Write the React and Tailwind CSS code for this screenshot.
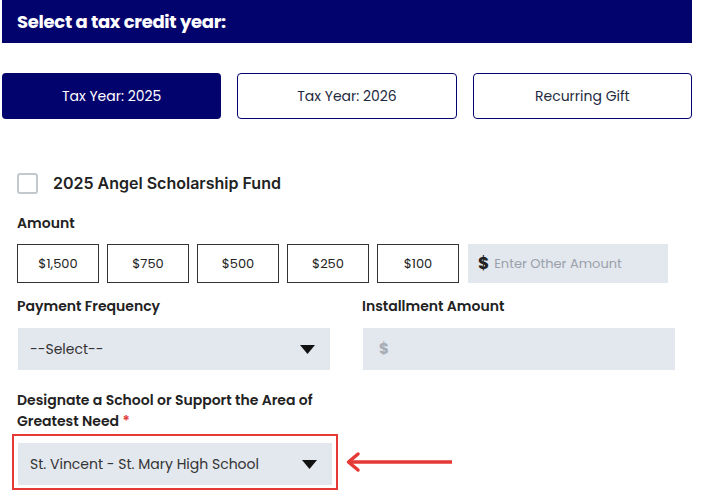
import React, { useState } from 'react';

const NAVY = 'bg-[#03036e]';

const Caret = () => (
  <svg width="15" height="9" viewBox="0 0 15 9" className="shrink-0">
    <path d="M0 0 H15 L7.5 9 Z" fill="#111" />
  </svg>
);

const App = () => {
  const [year, setYear] = useState('2025');
  const [checked, setChecked] = useState(false);
  const amounts = ['$1,500', '$750', '$500', '$250', '$100'];

  return (
    <div className="w-[710px] h-[492px] overflow-hidden bg-white pl-[2px] font-['Poppins','Open_Sans',sans-serif] text-[#222]">
      {/* header bar */}
      <div className={`${NAVY} w-[690px] h-[43px] flex items-center pl-[15px]`}>
        <h2 className="text-white text-[18px] font-bold tracking-[-0.3px]">Select a tax credit year:</h2>
      </div>

      {/* year tabs */}
      <div className="mt-[30px] w-[690px] grid grid-cols-3 gap-4">
        {[
          ['2025', 'Tax Year: 2025'],
          ['2026', 'Tax Year: 2026'],
          ['rec', 'Recurring Gift'],
        ].map(([key, label]) => (
          <button
            key={key}
            onClick={() => setYear(key)}
            className={
              year === key
                ? `${NAVY} h-[46px] rounded-[4px] text-white text-[14px]`
                : 'h-[46px] rounded-[4px] border border-[#03036e] bg-white text-[#1e2a40] text-[14px]'
            }
          >
            {label}
          </button>
        ))}
      </div>

      <div className="pl-[15px]">
        {/* fund checkbox */}
        <label className="mt-[52px] flex items-center gap-[15px] cursor-pointer">
          <span
            onClick={() => setChecked(!checked)}
            className="w-[21px] h-[21px] rounded-[3px] border-2 border-[#c2c8cc] bg-white"
          />
          <span className="font-['Inter',sans-serif] text-[16px] font-semibold text-[#222]">
            2025 Angel Scholarship Fund
          </span>
        </label>

        {/* amount */}
        <p className="mt-[18px] text-[14px] font-semibold leading-[20px]">Amount</p>
        <div className="mt-[11px] flex items-center gap-[8px]">
          {amounts.map((a) => (
            <button
              key={a}
              className="w-[82px] h-[39px] border border-[#333] bg-white text-[13px] text-[#222]"
            >
              {a}
            </button>
          ))}
          <div className="ml-[1px] w-[200px] h-[39px] bg-[#e3e7ee] flex items-center pl-[10px] gap-[5px]">
            <span className="text-[17px] font-bold text-[#222]">$</span>
            <span className="text-[13px] text-[#9aa1ab]">Enter Other Amount</span>
          </div>
        </div>

        {/* frequency + installment */}
        <div className="mt-[13px] flex gap-[32px]">
          <div className="w-[313px]">
            <p className="text-[14px] font-semibold leading-[20px]">Payment Frequency</p>
            <div className="mt-[12px] ml-[1px] h-[42px] bg-[#e3e7ee] flex items-center justify-between pl-[12px] pr-[15px]">
              <span className="text-[14px] text-[#333]">--Select--</span>
              <Caret />
            </div>
          </div>
          <div className="w-[313px]">
            <p className="text-[14px] font-semibold leading-[20px]">Installment Amount</p>
            <div className="mt-[12px] ml-[1px] h-[42px] bg-[#e3e7ee] flex items-center pl-[16px]">
              <span className="text-[15px] font-bold text-[#a7adb5]">$</span>
            </div>
          </div>
        </div>

        {/* school */}
        <div className="mt-[20px] w-[320px] text-[14px] font-semibold leading-[21px]">
          <p>Designate a School or Support the Area of</p>
          <p>
            Greatest Need <span className="text-[#e53935]">*</span>
          </p>
        </div>
        <div className="mt-[2px] -ml-[5px] flex items-center">
          <div className="w-[326px] border-2 border-[#e53935] pt-[7px] pb-[3px] px-[4px]">
            <div className="h-[42px] bg-[#e3e7ee] flex items-center justify-between pl-[12px] pr-[15px]">
              <span className="text-[14px] text-[#333]">St. Vincent - St. Mary High School</span>
              <Caret />
            </div>
          </div>
          <svg width="110" height="22" viewBox="0 0 110 22" className="ml-[7px]">
            <path d="M6 11 H107" stroke="#e53935" strokeWidth="3.5" />
            <path d="M13 3 L3.5 11 L13 19" fill="none" stroke="#e53935" strokeWidth="3.5" strokeLinecap="round" strokeLinejoin="round" />
          </svg>
        </div>
      </div>
    </div>
  );
};

export default App;
